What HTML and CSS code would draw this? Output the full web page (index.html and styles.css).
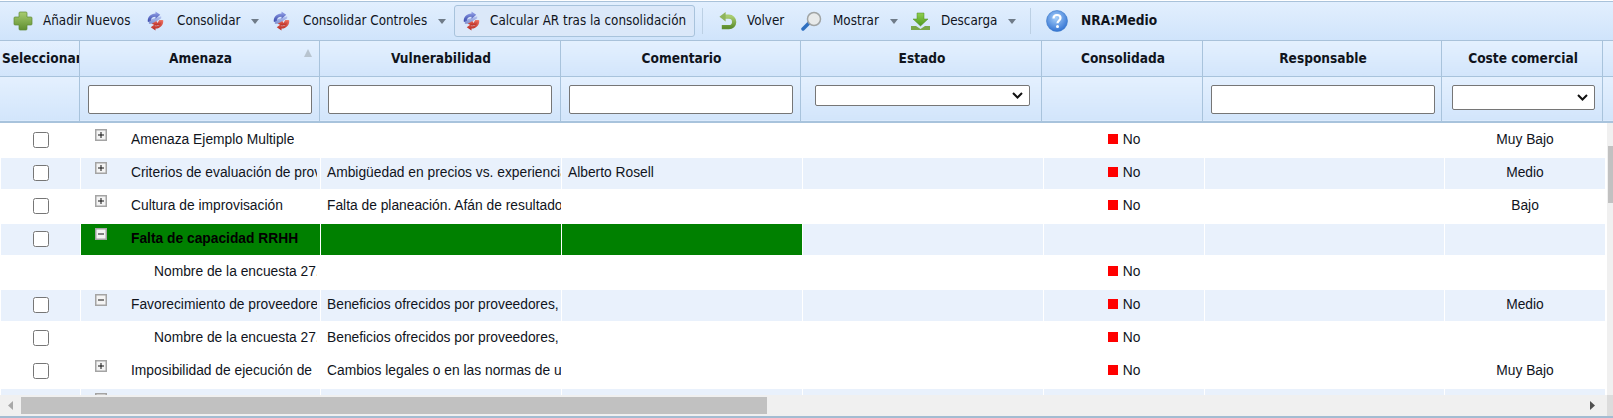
FILE: index.html
```html
<!DOCTYPE html>
<html lang="es">
<head>
<meta charset="utf-8">
<title>Consolidación</title>
<link rel="stylesheet" href="styles.css">
</head>
<body>
<svg class="defs" width="0" height="0" aria-hidden="true">
  <defs>
    <linearGradient id="gBlue" x1="0" y1="0" x2="0" y2="1"><stop offset="0" stop-color="#9aa8ec"/><stop offset="1" stop-color="#3444a8"/></linearGradient>
    <linearGradient id="gRed" x1="0" y1="0" x2="0" y2="1"><stop offset="0" stop-color="#f27868"/><stop offset="1" stop-color="#b4261e"/></linearGradient>
    <linearGradient id="gGreen" x1="0" y1="0" x2="0" y2="1"><stop offset="0" stop-color="#a8cc70"/><stop offset="1" stop-color="#5f8f30"/></linearGradient>
    <linearGradient id="gDown" x1="0" y1="0" x2="0" y2="1"><stop offset="0" stop-color="#8fd050"/><stop offset="1" stop-color="#4f9a20"/></linearGradient>
    <radialGradient id="gHelp" cx=".45" cy=".35" r=".7"><stop offset="0" stop-color="#a8d0fa"/><stop offset="1" stop-color="#2a6cd0"/></radialGradient>
    <symbol id="sync" viewBox="0 0 20 20">
      <path d="M2 11C1 6 5 2 10 2V0l5 3.500L10 8V5.500C7 5.500 5 7 5 10z" fill="url(#gBlue)"/>
      <path d="M3 9l13-4 0 2-9 6-4 0z" fill="url(#gBlue)" opacity=".55"/>
      <path d="M18 9c1 5-3 9-8 9v2l-5-3.500L10 13v2.500c3 0 5-1.500 5-4.500z" fill="url(#gRed)"/>
      <path d="M6 13l5-3 1 2 2-3 4 0-3 5-4 1z" fill="url(#gRed)"/>
    </symbol>
    <symbol id="caret" viewBox="0 0 8 5"><path d="M0 0h8L4 5z" fill="#6f7b88"/></symbol>
    <symbol id="tplus" viewBox="0 0 12 12"><path d="M.75.750h10.500v10.500H.75z" fill="#f4f4f4" stroke="#a4a4a4" stroke-width="1.500"/><path d="M3 6h6M6 3v6" stroke="#111" stroke-width="1"/></symbol>
    <symbol id="tminus" viewBox="0 0 12 12"><path d="M.75.750h10.500v10.500H.75z" fill="#f4f4f4" stroke="#a4a4a4" stroke-width="1.500"/><path d="M3 6h6" stroke="#111" stroke-width="1"/></symbol>
  </defs>
</svg>
<main class="panel">
  <div class="toolbar">
    <button class="tool tool-add"><svg class="ico ico-add" viewBox="0 0 20 20"><path d="M7 1h6a1 1 0 0 1 1 1v4h4a1 1 0 0 1 1 1v6a1 1 0 0 1-1 1h-4v4a1 1 0 0 1-1 1H7a1 1 0 0 1-1-1v-4H2a1 1 0 0 1-1-1V7a1 1 0 0 1 1-1h4V2a1 1 0 0 1 1-1z" fill="url(#gGreen)" stroke="#5f8a35" stroke-width=".7"/></svg><span>Añadir Nuevos</span></button>
    <button class="tool tool-cons"><svg class="ico ico-sync"><use href="#sync"/></svg><span>Consolidar</span><svg class="caret"><use href="#caret"/></svg></button>
    <button class="tool tool-ctrl"><svg class="ico ico-sync"><use href="#sync"/></svg><span>Consolidar Controles</span><svg class="caret"><use href="#caret"/></svg></button>
    <button class="tool tool-active"><svg class="ico ico-sync"><use href="#sync"/></svg><span>Calcular AR tras la consolidación</span></button>
    <i class="sep sep-a"></i>
    <button class="tool tool-back"><svg class="ico ico-back" viewBox="0 0 20 20"><path d="M4 16.500h7.500a5.500 5.500 0 0 0 0-11H7" fill="none" stroke="url(#gGreen)" stroke-width="4.500"/><path d="M8 0.500L1.500 5.500 8 10.500z" fill="#8fb45c"/></svg><span>Volver</span></button>
    <button class="tool tool-show"><svg class="ico ico-mag" viewBox="0 0 21 21"><path d="M8 12l-6 6" stroke="#2f6fc0" stroke-width="3.500" stroke-linecap="round"/><circle cx="13" cy="8" r="6.500" fill="#e8eaea" stroke="#a0a4a4" stroke-width="1.500"/></svg><span>Mostrar</span><svg class="caret"><use href="#caret"/></svg></button>
    <button class="tool tool-down"><svg class="ico ico-down" viewBox="0 0 19 19"><path d="M6 1h7v6h4l-7.500 7L2 7h4z" fill="url(#gDown)" stroke="#4f8a20" stroke-width=".5"/><path d="M0 14h5l4.500 3 4.500-3h5v4H0z" fill="#7aa84a"/></svg><span>Descarga</span><svg class="caret"><use href="#caret"/></svg></button>
    <i class="sep sep-b"></i>
    <svg class="ico-help" viewBox="0 0 22 22"><circle cx="11" cy="11" r="10.500" fill="url(#gHelp)" stroke="#3a78c8" stroke-width=".6"/><path d="M7.500 8.500C7.500 6 9 5 11 5s3.500 1 3.500 3c0 2.700-3 2.500-3 5.200" fill="none" stroke="#fff" stroke-width="2.200"/><circle cx="11.500" cy="16.500" r="1.500" fill="#fff"/></svg>
    <strong class="nra">NRA:Medio</strong>
  </div>

  <table class="head">
    <colgroup><col class="h1"><col class="h2"><col class="h3"><col class="h4"><col class="h5"><col class="h6"><col class="h7"><col class="h8"><col></colgroup>
    <thead>
      <tr class="titles">
        <th class="tight">Seleccionar</th>
        <th class="sorted">Amenaza<svg class="sort" viewBox="0 0 8 8"><path d="M4 0l4 8H0z" fill="#b8c4cf"/></svg></th>
        <th>Vulnerabilidad</th><th>Comentario</th><th>Estado</th><th>Consolidada</th><th>Responsable</th><th>Coste comercial</th><th></th>
      </tr>
      <tr class="filters">
        <th></th>
        <th><input class="field" type="text"></th>
        <th><input class="field" type="text"></th>
        <th><input class="field" type="text"></th>
        <th><select class="pick pick-a"><option></option></select></th>
        <th></th>
        <th><input class="field" type="text"></th>
        <th><select class="pick pick-b"><option></option></select></th>
        <th></th>
      </tr>
    </thead>
  </table>

  <div class="viewport">
    <table class="grid">
      <colgroup><col class="c1"><col class="c2"><col class="c3"><col class="c4"><col class="c5"><col class="c6"><col class="c7"><col class="c8"></colgroup>
      <tbody>
        <tr>
          <td class="chk"><input type="checkbox"></td>
          <td><div class="tree"><svg class="tog"><use href="#tplus"/></svg><span>Amenaza Ejemplo Multiple</span></div></td>
          <td></td><td></td><td></td>
          <td class="st"><i class="red"></i>No</td><td></td><td class="ctr">Muy Bajo</td>
        </tr>
        <tr class="alt">
          <td class="chk"><input type="checkbox"></td>
          <td><div class="tree"><svg class="tog"><use href="#tplus"/></svg><span>Criterios de evaluación de proveedores</span></div></td>
          <td><div class="txt">Ambigüedad en precios vs. experiencia</div></td><td><div class="txt">Alberto Rosell</div></td><td></td>
          <td class="st"><i class="red"></i>No</td><td></td><td class="ctr">Medio</td>
        </tr>
        <tr>
          <td class="chk"><input type="checkbox"></td>
          <td><div class="tree"><svg class="tog"><use href="#tplus"/></svg><span>Cultura de improvisación</span></div></td>
          <td><div class="txt">Falta de planeación. Afán de resultados</div></td><td></td><td></td>
          <td class="st"><i class="red"></i>No</td><td></td><td class="ctr">Bajo</td>
        </tr>
        <tr class="alt">
          <td class="chk"><input type="checkbox"></td>
          <td class="hot"><div class="tree"><svg class="tog"><use href="#tminus"/></svg><span>Falta de capacidad RRHH</span></div></td>
          <td class="hot"></td><td class="hot"></td><td></td>
          <td></td><td></td><td></td>
        </tr>
        <tr>
          <td class="chk"></td>
          <td><div class="tree child"><span>Nombre de la encuesta 27.03.2020</span></div></td>
          <td></td><td></td><td></td>
          <td class="st"><i class="red"></i>No</td><td></td><td></td>
        </tr>
        <tr class="alt">
          <td class="chk"><input type="checkbox"></td>
          <td><div class="tree"><svg class="tog"><use href="#tminus"/></svg><span>Favorecimiento de proveedores</span></div></td>
          <td><div class="txt">Beneficios ofrecidos por proveedores,</div></td><td></td><td></td>
          <td class="st"><i class="red"></i>No</td><td></td><td class="ctr">Medio</td>
        </tr>
        <tr>
          <td class="chk"><input type="checkbox"></td>
          <td><div class="tree child"><span>Nombre de la encuesta 27.03.2020</span></div></td>
          <td><div class="txt">Beneficios ofrecidos por proveedores,</div></td><td></td><td></td>
          <td class="st"><i class="red"></i>No</td><td></td><td></td>
        </tr>
        <tr>
          <td class="chk"><input type="checkbox"></td>
          <td><div class="tree"><svg class="tog"><use href="#tplus"/></svg><span>Imposibilidad de ejecución de</span></div></td>
          <td><div class="txt">Cambios legales o en las normas de uso</div></td><td></td><td></td>
          <td class="st"><i class="red"></i>No</td><td></td><td class="ctr">Muy Bajo</td>
        </tr>
        <tr class="alt">
          <td class="chk"></td>
          <td><div class="tree"><svg class="tog"><use href="#tplus"/></svg></div></td>
          <td></td><td></td><td></td><td></td><td></td><td></td>
        </tr>
      </tbody>
    </table>
    <div class="vbar"><div class="vthumb"></div></div>
  </div>

  <div class="hbar">
    <svg class="arrow" viewBox="0 0 5 9"><path d="M5 0v9L0 4.500z" fill="#a8a8a8"/></svg>
    <div class="hthumb"></div>
    <svg class="arrow arrow-r" viewBox="0 0 5 9"><path d="M0 0v9l5-4.500z" fill="#505050"/></svg>
    <div class="corner"></div>
  </div>
</main>
</body>
</html>
```

FILE: styles.css
```css
* { box-sizing: border-box; }
html, body { margin: 0; height: 100%; background: #fff; overflow: hidden; }
.defs { display: block; height: 0; }
.panel { height: 418px; display: flex; flex-direction: column; padding-top: 1px; border-bottom: 2px solid #a3bcd2; }

.toolbar {
  height: 40px; flex: none; display: flex; align-items: center;
  padding-left: 13px;
  background: linear-gradient(#e2effe, #d0e4fb);
  border-top: 1px solid #a9c2da; border-bottom: 1px solid #a9c2da;
  font: 13.330px/1 "DejaVu Sans Condensed", "DejaVu Sans", sans-serif;
  color: #10141c;
}
.tool {
  display: flex; align-items: center; padding: 0; background: none; border: 0;
  font: inherit; color: inherit; height: 32px; white-space: nowrap;
}
.tool-add { width: 133px; }
.tool-add span { margin-left: 10px; }
.tool-cons { width: 126px; }
.tool-cons span { margin-left: 12px; }
.tool-ctrl { width: 182px; }
.tool-ctrl span { margin-left: 12px; }
.tool-active {
  width: 241px; padding-left: 7px;
  background: #dbe8f9; border: 1px solid #a8c3dc; border-radius: 3px;
}
.tool-active span { margin-left: 9px; }
.tool-back { width: 83px; }
.tool-back span { margin-left: 10px; }
.tool-show { width: 110px; }
.tool-show span { margin-left: 11px; }
.tool-down { width: 119px; }
.tool-down span { margin-left: 11px; }
.ico { flex: none; }
.ico-add { width: 20px; height: 20px; }
.ico-sync { width: 19px; height: 20px; }
.ico-back { width: 19px; height: 20px; }
.ico-mag { width: 21px; height: 21px; }
.ico-down { width: 19px; height: 19px; }
.ico-help { width: 22px; height: 22px; margin-left: 15px; flex: none; }
.caret { width: 8px; height: 5px; margin-left: 11px; flex: none; }
.sep { width: 1px; height: 26px; background: #bcd0e4; flex: none; }
.sep-a { margin: 0 15px 0 7px; }
.nra { margin-left: 13px; font-weight: 700; font-size: 13.600px; }

.head {
  table-layout: fixed; border-collapse: collapse; width: 1613px; flex: none;
  font: 700 13.600px "DejaVu Sans Condensed", "DejaVu Sans", sans-serif; color: #10141c;
}
.h1 { width: 79px; } .h2 { width: 240px; } .h3 { width: 241px; } .h4 { width: 240px; }
.h5 { width: 241px; } .h6 { width: 161px; } .h7 { width: 239px; } .h8 { width: 161px; }
.head th {
  padding: 0; border-right: 1px solid #a8c3dc; border-bottom: 1px solid #a8c3dc;
  background: linear-gradient(#e4f0fe, #d2e5fb); text-align: center; overflow: hidden; white-space: nowrap;
}
.head th:last-child { border-right: 0; }
.titles th { height: 35px; padding-left: 3px; }
.filters th { height: 46px; border-bottom: 2px solid #a8c3dc; vertical-align: top; }
.tight { text-align: left !important; padding-left: 2px !important; }
.sorted { position: relative; }
.sort { position: absolute; top: 8px; right: 7px; width: 8px; height: 8px; }
.field {
  display: block; width: 224px; height: 29px; margin: 8px 0 0 8px;
  background: #fff; border: 1px solid #767676; border-radius: 2px;
}
.pick {
  display: block; margin-top: 8px; appearance: none;
  background: #fff url("data:image/svg+xml,%3Csvg xmlns='http://www.w3.org/2000/svg' width='11' height='7'%3E%3Cpath d='M1 1l4.500 4.500L10 1' fill='none' stroke='%23111' stroke-width='2'/%3E%3C/svg%3E") no-repeat right 6px center;
  border: 1px solid #767676; border-radius: 2px; font-size: 12px;
}
.pick-a { width: 215px; height: 21px; margin-left: 14px; }
.pick-b { width: 143px; height: 25px; margin-left: 10px; }

.viewport { flex: 1; min-height: 0; display: flex; overflow: hidden; background: #fff; }
.grid {
  table-layout: fixed; border-collapse: separate; border-spacing: 1px 2px;
  width: 1606px; height: max-content; flex: none; margin: 0 1px 0 0;
  font: 13.800px "Liberation Sans", Arial, sans-serif; color: #10141c;
}
.c1 { width: 79px; } .c2 { width: 239px; } .c3 { width: 240px; } .c4 { width: 240px; }
.c5 { width: 240px; } .c6 { width: 160px; } .c7 { width: 239px; } .c8 { width: 160px; }
.grid td { height: 31px; padding: 0 0 2px; overflow: hidden; white-space: nowrap; }
.alt td { background: #e9f1fc; }
.alt td.hot, td.hot { background: #008000; }
.hot { font-weight: 700; color: #000; }
.chk { text-align: center; }
.chk input { display: block; width: 16px; height: 16px; margin: 0 auto; }
.tree { display: flex; align-items: center; padding: 0 3px 0 14px; height: 29px; overflow: hidden; }
.tog { width: 12px; height: 12px; flex: none; margin: -10px 24px 0 0; }
.tree span { overflow: hidden; }
.child { padding-left: 73px; }
.txt { padding: 0 0 0 6px; overflow: hidden; }
.ctr { text-align: center; }
.st { text-align: center; }
.red { display: inline-block; width: 10px; height: 10px; background: #f00; margin-right: 5px; }

.vbar { width: 6px; background: #f0f0f0; flex: none; }
.vthumb { width: 5px; height: 57px; margin: 23px 0 0 1px; background: #c1c1c1; }

.hbar { height: 21px; flex: none; background: #f0f0f0; display: flex; align-items: center; padding-left: 8px; }
.arrow { width: 5px; height: 9px; flex: none; }
.hthumb { width: 746px; height: 17px; margin-left: 8px; background: #c1c1c1; }
.arrow-r { margin-left: auto; margin-right: 12px; }
.corner { width: 6px; height: 21px; background: #dcdcdc; flex: none; }
```
